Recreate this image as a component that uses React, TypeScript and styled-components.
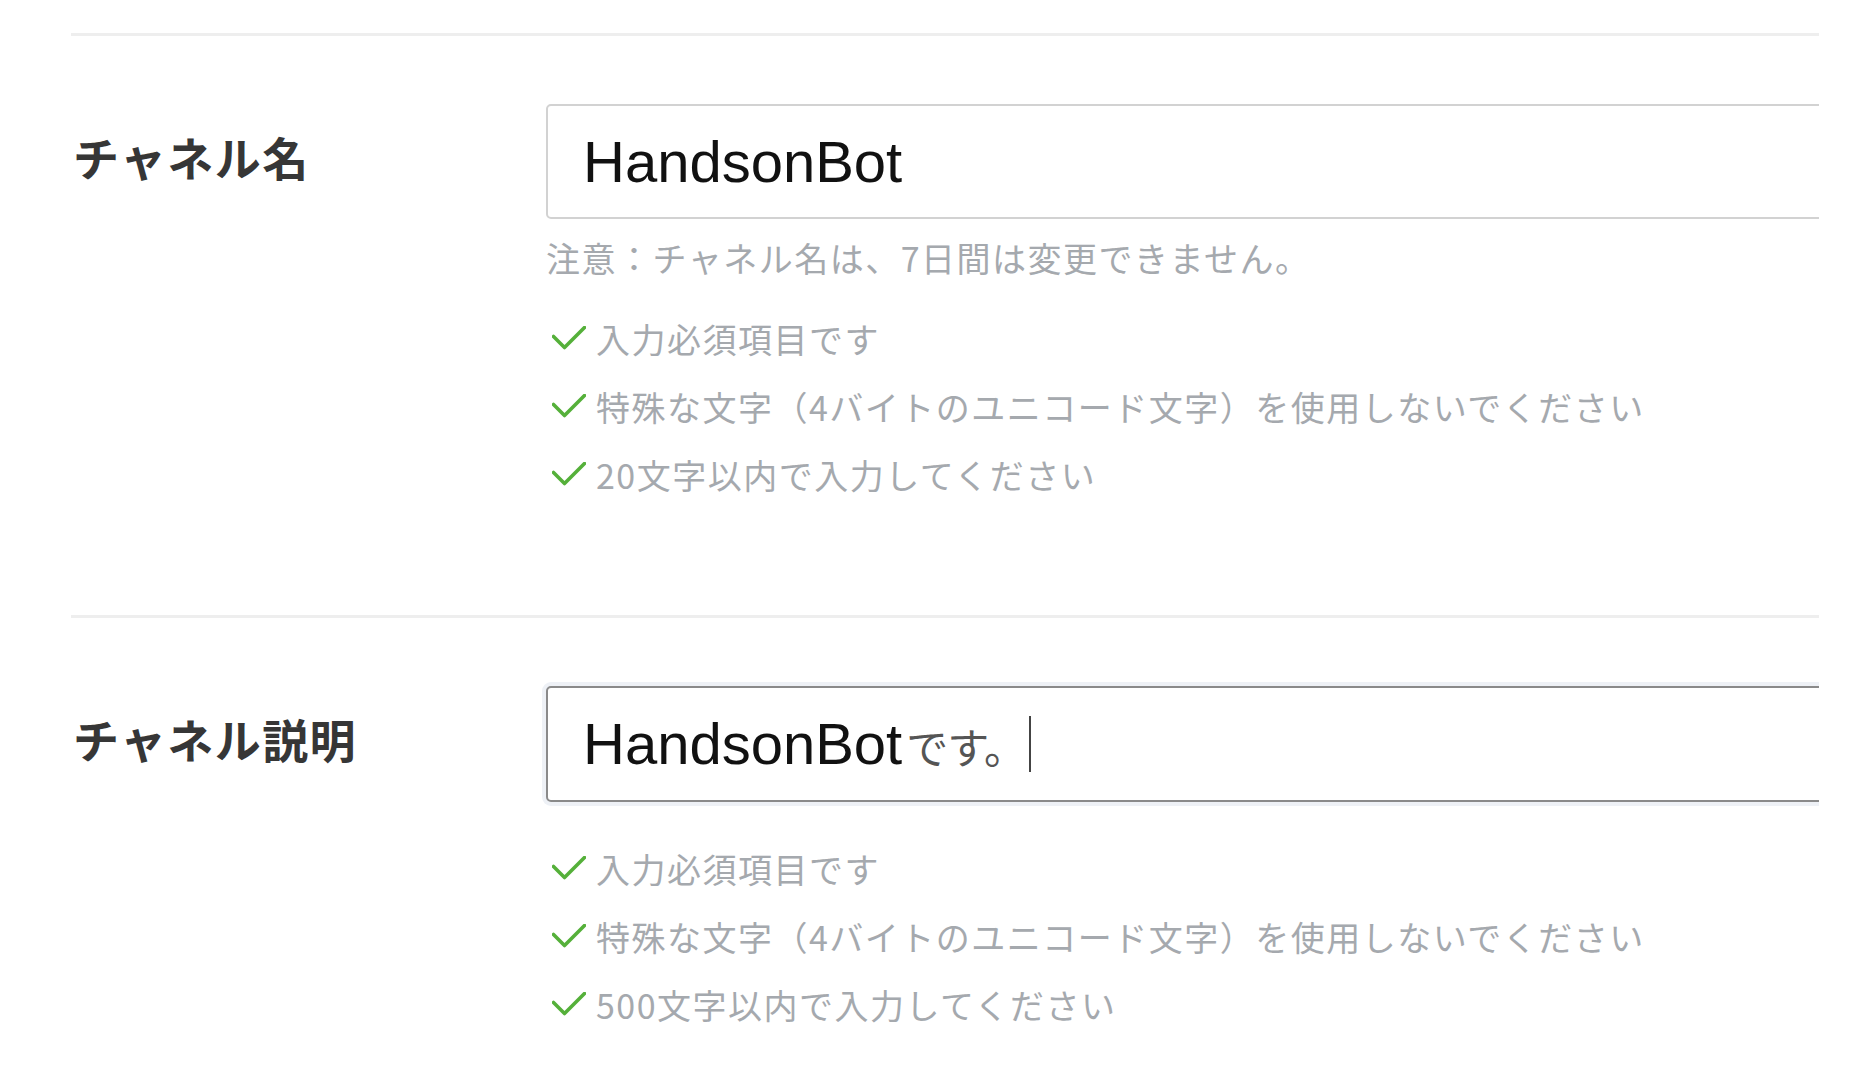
import React from "react";
import styled, { createGlobalStyle } from "styled-components";

const Global = createGlobalStyle`
  html, body { margin: 0; padding: 0; background: #ffffff; }
  body { font-family: "Noto Sans CJK JP", "Noto Sans", sans-serif; }
`;

const Page = styled.div`
  padding: 33px 0 0 71px;
  width: 1748px;
  overflow: hidden;
`;

const Section = styled.section<{ $bottom: number }>`
  border-top: 3px solid #eeeeee;
  padding: 68px 0 ${(p) => p.$bottom}px 0;
  display: grid;
  grid-template-columns: 475px 1fr;
  align-items: start;
`;

const Label = styled.div<{ $h: number }>`
  height: ${(p) => p.$h}px;
  box-sizing: border-box;
  padding: 0 0 12px 2px;
  display: flex;
  align-items: center;
  font-family: "Noto Sans CJK JP", sans-serif;
  font-weight: 700;
  font-size: 46px;
  color: #363636;
  letter-spacing: 1.4px;
`;

const Field = styled.div`
  display: flex;
  flex-direction: column;
  min-width: 0;
`;

const InputBox = styled.div<{ $focused?: boolean; $h: number }>`
  box-sizing: border-box;
  width: 1400px;
  height: ${(p) => p.$h}px;
  border: 2px solid ${(p) => (p.$focused ? "#8a8a8a" : "#d2d2d2")};
  border-radius: 5px;
  box-shadow: ${(p) => (p.$focused ? "0 0 0 4px #eef1f6" : "none")};
  padding-left: 35px;
  display: flex;
  align-items: center;
  background: #fff;
`;

const InputText = styled.span`
  font-family: "Liberation Sans", Arial, sans-serif;
  font-size: 58px;
  color: #111111;
  white-space: nowrap;
  line-height: 1;
`;

const Composition = styled.span`
  font-family: "Noto Sans CJK JP", sans-serif;
  font-size: 42px;
  letter-spacing: -1px;
  color: #555555;
  margin-left: 4px;
`;

const Caret = styled.span`
  display: inline-block;
  width: 2px;
  height: 56px;
  background: #444444;
  margin-left: 4px;
`;

const Note = styled.div`
  margin-top: 15px;
  font-size: 34px;
  line-height: 48px;
  color: #a5a9ae;
  letter-spacing: 1.5px;
  white-space: nowrap;
`;

const Rules = styled.ul<{ $top: number }>`
  list-style: none;
  margin: ${(p) => p.$top}px 0 0 0;
  padding: 0;
  display: flex;
  flex-direction: column;
  gap: 20px;
`;

const Rule = styled.li`
  display: flex;
  align-items: center;
  height: 48px;
  padding-left: 6px;
  gap: 10px;
  font-size: 34px;
  color: #a5a9ae;
  letter-spacing: 1.5px;
  white-space: nowrap;
`;

const Check = () => (
  <svg width="34" height="24" viewBox="0 0 34 24" fill="none">
    <path
      d="M1.5 10.5 L12.5 21.5 L32.5 1.5"
      stroke="#55b03a"
      strokeWidth="3.6"
      strokeLinecap="round"
      strokeLinejoin="round"
    />
  </svg>
);

const RuleList = ({ items, top }: { items: string[]; top: number }) => (
  <Rules $top={top}>
    {items.map((t) => (
      <Rule key={t}>
        <Check />
        <span>{t}</span>
      </Rule>
    ))}
  </Rules>
);

export default function App() {
  return (
    <>
      <Global />
      <Page>
        <Section $bottom={117}>
          <Label $h={115}>チャネル名</Label>
          <Field>
            <InputBox $h={115}>
              <InputText>HandsonBot</InputText>
            </InputBox>
            <Note>注意：チャネル名は、7日間は変更できません。</Note>
            <RuleList
              top={32}
              items={[
                "入力必須項目です",
                "特殊な文字（4バイトのユニコード文字）を使用しないでください",
                "20文字以内で入力してください",
              ]}
            />
          </Field>
        </Section>
        <Section $bottom={40}>
          <Label $h={116}>チャネル説明</Label>
          <Field>
            <InputBox $focused $h={116}>
              <InputText>
                HandsonBot
                <Composition>です。</Composition>
              </InputText>
              <Caret />
            </InputBox>
            <RuleList
              top={42}
              items={[
                "入力必須項目です",
                "特殊な文字（4バイトのユニコード文字）を使用しないでください",
                "500文字以内で入力してください",
              ]}
            />
          </Field>
        </Section>
      </Page>
    </>
  );
}
